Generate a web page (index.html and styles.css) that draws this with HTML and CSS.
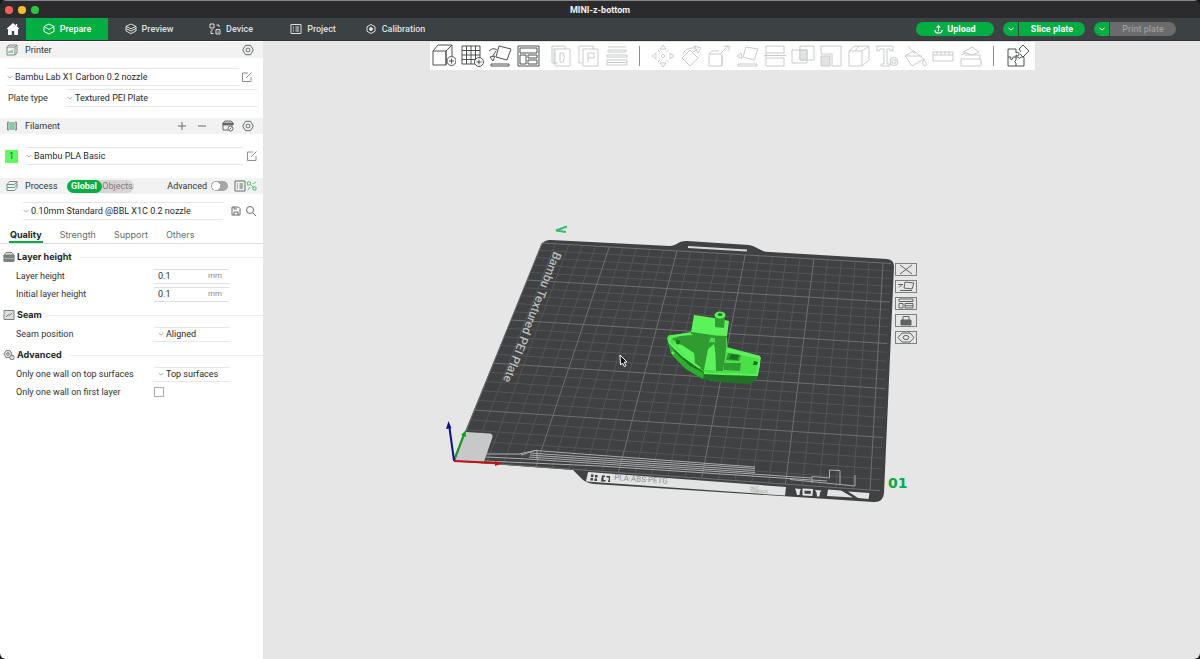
FILE: index.html
```html
<!DOCTYPE html>
<html lang="en">
<head>
<meta charset="utf-8">
<title>MINI-z-bottom</title>
<link rel="stylesheet" href="styles.css">
</head>
<body>
<svg class="defs" aria-hidden="true">
  <symbol id="chev" viewBox="0 0 6 6"><path d="M.5 2 3 4 5.500 2"/></symbol>
  <symbol id="gear" viewBox="0 0 12 12"><path d="M3.500 1.300h5L11.300 6 8.500 10.700h-5L.7 6z"/><circle cx="6" cy="6" r="2"/></symbol>
  <symbol id="edit" viewBox="0 0 12 12"><path d="M7 2H1.500v8.500H10V6M5 7l5.500-5.500"/></symbol>
</svg>
<div class="window">
  <header class="titlebar">
    <div class="lights"><i class="red"></i><i class="yellow"></i><i class="green"></i></div>
    <h1>MINI-z-bottom</h1>
  </header>

  <nav class="topnav">
    <button class="home" aria-label="Home"><svg viewBox="0 0 14 14"><path d="M7 1 .8 6.500 2 7.600V13h3.800V9h2.400v4H12V7.600l1.200-1.100-2-1.800V2H9.800v1.500z"/></svg></button>
    <button class="tab active"><svg viewBox="0 0 12 12"><path d="M6 1 11 3.500v5L6 11 1 8.500v-5zM1 3.500 6 6.500l5-3"/></svg>Prepare</button>
    <button class="tab"><svg viewBox="0 0 12 12"><path d="M6 1 11 3.400 6 5.800 1 3.400zM1 5.600 6 8l5-2.400M1 8 6 10.600 11 8M1 3.400V8M11 3.400V8"/></svg>Preview</button>
    <button class="tab"><svg viewBox="0 0 12 12"><path d="M1 1h4v4H1zM2 7h2M7.500 2H10v2M2 8v2.500h2.500M7 6.500h4V11H7zM8.500 9h1.500"/></svg>Device</button>
    <button class="tab"><svg viewBox="0 0 12 12"><path d="M1 1.500h10v9H1zM3 4h1M5.500 4H9M3 6h1M5.500 6H9M3 8h1M5.500 8H9"/></svg>Project</button>
    <button class="tab"><svg viewBox="0 0 12 12"><path d="M6 1.500 10 3.700v4.600L6 10.500 2 8.300V3.700z"/><circle class="dot" cx="6" cy="6" r="1.500"/></svg>Calibration</button>
    <div class="actions">
      <button class="pill upload"><svg viewBox="0 0 10 10"><path d="M5 7V1.200M3 3l2-2 2 2M1 5.500C1 10 9 10 9 5.500"/></svg>Upload</button>
      <div class="split"><button class="more" aria-label="Slice options"><svg><use href="#chev"/></svg></button><button class="main">Slice plate</button></div>
      <div class="split"><button class="more" aria-label="Print options"><svg><use href="#chev"/></svg></button><button class="main" disabled>Print plate</button></div>
    </div>
  </nav>

  <div class="body">
    <aside class="sidebar">
      <div class="head">
        <svg class="ico" viewBox="0 0 12 12"><path d="M1 3 3 1h8v8l-2 2H1zM1 3h8v8M9 3l2-2"/><path class="accent" d="M2 8l5-2.500V9H2z"/></svg>
        <h2>Printer</h2>
        <button class="ib push" aria-label="Printer settings"><svg><use href="#gear"/></svg></button>
      </div>
      <div class="row printer">
        <label class="pick"><svg><use href="#chev"/></svg><select aria-label="Printer"><option>Bambu Lab X1 Carbon 0.2 nozzle</option></select></label>
        <button class="ib" aria-label="Edit printer"><svg><use href="#edit"/></svg></button>
      </div>
      <div class="row plate">
        <label for="plate">Plate type</label>
        <span class="pick"><svg><use href="#chev"/></svg><select id="plate"><option>Textured PEI Plate</option></select></span>
      </div>

      <div class="head">
        <svg class="ico" viewBox="0 0 12 12"><path d="M3 2H1.500v8H3M9 2h1.500v8H9M3 2v8M9 2v8"/><path class="accent" d="M4 2h4v8H4z"/></svg>
        <h2>Filament</h2>
        <button class="ib push" aria-label="Add filament"><svg viewBox="0 0 12 12"><path d="M6 2v8M2 6h8"/></svg></button>
        <button class="ib" aria-label="Remove filament"><svg viewBox="0 0 12 12"><path d="M2 6h8"/></svg></button>
        <button class="ib ams" aria-label="Sync filament"><svg viewBox="0 0 12 12"><path d="M1 5V3l2-2h6l2 2v2M1 5v5h5"/><path class="solid" d="M1 3h10v2H1z"/><circle cx="8.500" cy="8.500" r="2.500"/><path d="m7.500 9.500 2-2M3 3v2M6 3v2"/></svg></button>
        <button class="ib" aria-label="Filament settings"><svg><use href="#gear"/></svg></button>
      </div>
      <div class="row filament">
        <button class="swatch">1</button>
        <label class="pick"><svg><use href="#chev"/></svg><select aria-label="Filament"><option>Bambu PLA Basic</option></select></label>
        <button class="ib" aria-label="Edit filament"><svg><use href="#edit"/></svg></button>
      </div>

      <div class="head">
        <svg class="ico" viewBox="0 0 12 12"><path d="M3.500 1.500H11L8.500 4.500H1zM1 10.500h7.500L11 7.500M11 1.500v6M1 4.500v6"/><path class="line" d="M1 7.500h7.500L11 4.500"/></svg>
        <h2>Process</h2>
        <div class="scope"><button class="on">Global</button><button>Objects</button></div>
        <label class="adv">Advanced<input type="checkbox" role="switch"></label>
        <button class="ib" aria-label="Parameter list"><svg viewBox="0 0 12 12"><path d="M1 1h10v10H1zM3 4h1M5.500 4H9M3 6h1M5.500 6H9M3 8h1M5.500 8H9"/></svg></button>
        <button class="ib compare" aria-label="Compare"><svg viewBox="0 0 12 12"><path d="M1.500 2h3v3h-3zM7 4l3-2M7 7h3v3H7zM4 7 2 10M5 5l3 3"/></svg></button>
      </div>
      <div class="row process">
        <label class="pick"><svg><use href="#chev"/></svg><select aria-label="Process"><option>0.10mm Standard @BBL X1C 0.2 nozzle</option></select></label>
        <button class="ib" aria-label="Save"><svg viewBox="0 0 12 12"><path d="M2 2h6.500L10 3.500V10H2zM4 10V7h4v3M4 2v2h3"/></svg></button>
        <button class="ib" aria-label="Search"><svg viewBox="0 0 12 12"><circle cx="5" cy="5" r="3.500"/><path d="m7.500 7.500 3.500 3.500"/></svg></button>
      </div>

      <div class="subtabs"><button class="on">Quality</button><button>Strength</button><button>Support</button><button>Others</button></div>

      <div class="groups">
        <fieldset>
          <legend><svg viewBox="0 0 12 12"><path class="fill" d="M1 10.500V4l2-2.500h6L11 4v6.500z"/><path class="solid" d="M1 4h10v2.500H1zM1 8h10v1.500H1z"/></svg>Layer height</legend>
          <div class="field"><label for="lh">Layer height</label><span class="num"><input id="lh" value="0.1"><em>mm</em></span></div>
          <div class="field"><label for="ilh">Initial layer height</label><span class="num"><input id="ilh" value="0.1"><em>mm</em></span></div>
        </fieldset>
        <fieldset>
          <legend><svg viewBox="0 0 12 12"><path class="fill" d="M1 1.500h10v9H1z"/><path d="m3 8 2-2 2 0 2-2"/></svg>Seam</legend>
          <div class="field"><label for="seam">Seam position</label><span class="pick"><svg><use href="#chev"/></svg><select id="seam"><option>Aligned</option></select></span></div>
        </fieldset>
        <fieldset>
          <legend><svg viewBox="0 0 12 12"><path class="fill" d="M3 1.500h4L9 5 7 8.500H3L1 5z"/><circle cx="5" cy="5" r="1.300"/><circle class="fill" cx="9" cy="8.500" r="2.200"/></svg>Advanced</legend>
          <div class="field"><label for="top">Only one wall on top surfaces</label><span class="pick"><svg><use href="#chev"/></svg><select id="top"><option>Top surfaces</option></select></span></div>
          <div class="field"><label for="first">Only one wall on first layer</label><input type="checkbox" id="first"></div>
        </fieldset>
      </div>
    </aside>

    <main class="workspace">
      <svg class="scene" viewBox="264 41 936 618" role="img" aria-label="Build plate with boat model">
        <path class="bed" d="M453 461 541 246Q544 239 551 240L670 246Q674 246 680 242Q683 241 687 241L749 245Q754 246 757 248L763 251Q765 252 770 252L887 259Q894 260 894 266L884 493Q883 503 873 502L594 484Q585 483 581 478L573 470Z"/>
        <path class="slot" d="M688 247 747 250.500"/>
        <g id="grid"></g>
        <text class="bedname" transform="translate(554 251) rotate(111.500)">Bambu Textured PEI Plate</text>
        <path class="pad" d="M466 432 490 433.500Q493 434 492.500 437L484 462 455 461Z"/>
        <g class="trace">
          <path d="M486 454H519L535 450.500 755 467M521 455 537 450V460M530 453 755 468.500M530 455 755 470.500M529 457 755 472.500M486 457 528 459 760 474.500M485 461 600 466 827 481M760 474.500 812 478"/>
          <path d="M812 483V476.500L829.500 478V470L840 470.500V484.500M790 479.500 855 486V475"/>
        </g>
        <path class="label" d="M588 472 786 487 785 495.500 586 481.500Z"/>
        <path class="mark" d="M591 474.500h2.500v2.500H591zM595 475h2.500v2.500H595zM590.500 478H593v2.500h-2.500zM594.500 478.500h2.500v2.500h-2.500zM602 475.500h3v1.500h-1.500v3h2v1.500H601zM606.500 476h3.500v6h-2v-1.500h.8v-3h-2.300z"/>
        <text class="small" transform="translate(614 480) rotate(4)">PLA·ABS·PETG</text>
        <text class="tiny" transform="translate(750 489) rotate(4)">HOT</text>
        <text class="tiny" transform="translate(750 492) rotate(4)">SURFACE</text>
        <path class="label" d="M795 488.500 801 489 800 491 799.500 495H797L796 491ZM815 490 821.500 490.500 820 492.500 819.500 496.500H817L816.500 492.500ZM828 489.500 841 490.500 853 497.500 827 496ZM848 491.500 869.500 493 868.500 499 858 498Z"/>
        <path class="cup" d="m803.500 489.500 8.500.5-.5 5-8-.5z"/>
        <g class="axes">
          <path class="g" d="m454 460 10-26"/><path class="g tip" d="m465.500 430.500-4.500 4.500 5 2z"/>
          <path class="b" d="M454 460.500 449.500 428"/><path class="b tip" d="m448.500 421-2.500 8 5.500-.8z"/>
          <path class="r" d="m454 461 43 2"/><path class="r tip" d="m502 463.500-7-2.500v5z"/>
        </g>
        <path class="flag" d="M567 226.500 556 230.500 566 232"/>
        <text class="plateno" x="888" y="488">01</text>

        <g class="boat">
          <path class="c1" d="M667 338Q668 334 674 335L691 332 727 337 727 347 760 356 760 366 757 377 750 383 712 381 700 377 684 367 671 353Z"/>
          <path class="c4" d="M668 343 675 350 690 362 704 372 757 376 754 382 748 384 718 382 702 379 686 369 673 356Z"/>
          <path class="c2" d="M668 343 676 353 690 366 704 373 703 379 686 369 673 356Z"/>
          <path class="c3" d="M672 339 680 336 694 335 696 356 684 347Z"/>
          <path class="c5" d="M673 343 682 345 694 353 697 364 686 357Z"/>
          <path class="c3" d="M693 333 711 337 706 349 704 371 695 365Z"/>
          <path class="c3" d="M706 344Q711 340 717 344L717 371 704 370 705 348Z"/>
          <path class="c5" d="M708 349 714 344 716 355 716 371 704 370Z"/>
          <path class="c3" d="M715 338 726 336 726 353 724 371 716 371Z"/>
          <path class="c1" d="M726 350 760 356 756 376 723 371Z"/>
          <path class="c5" d="M727 348 760 356 759 359 726 352Z"/>
          <path class="c3" d="M728 353 741 355 739 361 726 360ZM724 363 741 363 740 371 724 370Z"/>
          <path class="c4" d="M731 354 739 355 737 360 729 359Z"/>
          <path class="c5" d="M694 315 721 319 729 321 727 336 716 336 691 332Z"/>
          <path class="c3" d="M691 332 715 335.500 727 336 726 339 714 338 691 334ZM715 317 725 317 724 328 715 327Z"/>
          <ellipse class="c5" cx="720" cy="315" rx="5.500" ry="3.500"/>
          <ellipse class="c4" cx="720" cy="314.500" rx="2.500" ry="1.500"/>
          <ellipse class="c4" cx="678" cy="342" rx="2" ry="2.500"/><circle class="c5" cx="673" cy="353" r="1.500"/>
          <path class="c4" d="m754 361 4 1-1 3h-4z"/>
          <path class="rim" d="M691 333.500 673 336Q668 338 670 343L683 356 700 368"/>
          <path class="rim" d="m704 373 19 1 34 1 3-18"/>
        </g>
        <path class="cursor" d="m620 355 .5 10 2-2 1.800 3.500 1.700-.8-1.800-3.500 2.800-.2z"/>
      </svg>

      <div class="toolbar">
        <button aria-label="Add"><svg viewBox="0 0 24 24"><path d="M1 7h13v14H1zM1 7l5-6h14l-6 6M20 1v11M14 21V7"/><circle class="bg" cx="19.500" cy="17" r="4.500"/><path d="M17 17h5M19.500 14.500v5"/></svg></button>
        <button aria-label="Add plate"><svg viewBox="0 0 24 24"><path d="M2 2h18v18H2zM6.500 2v18M11 2v18M15.500 2v18M2 6.500h18M2 11h18M2 15.500h18"/><circle class="bg" cx="19" cy="18" r="4.500"/><path d="M16.500 18h5M19 15.500v5"/></svg></button>
        <button aria-label="Auto orient"><svg viewBox="0 0 24 24"><path d="m11 2 12 3-4 11-11-3zM3 20h18v2H3zM1 7q4-4 8-1M2 13l5-1-2 5zM4 13 8 7"/></svg></button>
        <button aria-label="Arrange"><svg viewBox="0 0 24 24"><path d="M2 2h21v20H2zM4 4h17v5H4zM4 11h6v9H4zM12 11h9v3h-9zM12 16h9v4h-9z"/></svg></button>
        <span class="gap"></span>
        <button disabled aria-label="Copy"><svg viewBox="0 0 24 24"><path d="M6 19H3V2h13v3M6 5h15v17H6zM9 19H5V4M11 9h3q3 4 0 9h-3z"/></svg></button>
        <button disabled aria-label="Paste"><svg viewBox="0 0 24 24"><path d="M5 19H2V2h14v3M6 5h15v17H6zM11 18V9h6v5h-6"/></svg></button>
        <button disabled aria-label="Layers"><svg viewBox="0 0 24 24"><path d="M3 3h18M3 6h18v2H3zM2 11h20v2H2zM2 16h20v5H2zM2 18.500h20"/></svg></button>
        <span class="sep"></span>
        <button disabled aria-label="Move"><svg viewBox="0 0 24 24"><path d="m12 1 3 4H9zM12 23l3-4H9zM1 12l4-3v6zM23 12l-4-3v6zM12 10l2 2-2 2-2-2zM7 6l2 2M17 6l-2 2M7 18l2-2M17 18l-2-2"/></svg></button>
        <button disabled aria-label="Rotate"><svg viewBox="0 0 24 24"><path d="m11 6 8 8-8 8-8-8zM4 10q2-7 13-6M15 2l7 2-3 5zM14 8l5-3"/></svg></button>
        <button disabled aria-label="Scale"><svg viewBox="0 0 24 24"><path d="M2 10h13v12H2zM2 10l3-3h7M15 22V12M14 9l7-7M17 2h5v5"/></svg></button>
        <button disabled aria-label="Lay on face"><svg viewBox="0 0 24 24"><path d="m11 3 12 2-4 11-11-3zM3 20h19v2H3zM2 12l5 3-1-6z"/></svg></button>
        <button disabled aria-label="Cut"><svg viewBox="0 0 24 24"><path d="M3 9V2h18v7zM3 14h18v8H3zM1 11.500h22M3 9v5"/></svg></button>
        <button disabled aria-label="Boolean"><svg viewBox="0 0 24 24"><path d="M1 6h15v13H1zM9 2h14v14H9z"/><path class="hatch" d="M9 6h7v10H9z"/></svg></button>
        <button disabled aria-label="Support paint"><svg viewBox="0 0 24 24"><path d="M2 2h20v20h-9V10H2z"/><path class="hatch" d="M2 12h9v10H2z"/></svg></button>
        <button disabled aria-label="Seam paint"><svg viewBox="0 0 24 24"><path d="M2 7h13v15H2zM2 7l5-5h15l-7 5M22 2v14l-7 6M8 7l4-5"/></svg></button>
        <button disabled aria-label="Text"><svg viewBox="0 0 24 24"><path d="M2 2h16v5h-2l-1-2h-3v15h3v2H6v-2h3V5H5L4 7H2z"/><circle class="bg" cx="19" cy="17.500" r="4"/><path d="M17 19v-3h4v3z"/></svg></button>
        <button disabled aria-label="Color paint"><svg viewBox="0 0 24 24"><path d="m11 7 10 8-12 7-7-10zM2 12h17M5 2l7 8M21 15q4 6 1 7-4-1-1-7z"/></svg></button>
        <button disabled aria-label="Measure"><svg viewBox="0 0 24 24"><path d="M2 8h20v9H2zM2 11h20M6 8v3M10 8v3M14 8v3M18 8v3"/></svg></button>
        <button disabled aria-label="Assemble"><svg viewBox="0 0 24 24"><path d="M2 15h20v7H2zM6 11h15v4M4 8l9-5 7 5-7 3zM2 11l5-2"/></svg></button>
        <span class="sep"></span>
        <button class="assembly" aria-label="Assembly view"><svg viewBox="0 0 24 24"><path d="M2 5h8v4q3-2 3 1t-3 1v2H7q0 3-2 2.500T5 13H2zM2 13v9h8v-3q-3-1 0-3v-3M10 22h8v-9h-3q-1 3-3 0h-2M13 5l4-4 6 6-6 6-3-3M13 5l2 3"/></svg></button>
      </div>

      <div class="platebtns">
        <button aria-label="Delete plate"><svg viewBox="0 0 20 11"><path d="m4 1 12 9M16 1 4 10"/></svg></button>
        <button aria-label="Orient plate"><svg viewBox="0 0 20 11"><path d="m9 1 9 1-2 6-8-1zM4 9.500h12M2 3.500h5M3 6.500l3-3"/></svg></button>
        <button aria-label="Arrange plate"><svg viewBox="0 0 20 11"><path d="M3 1h14v2.500H3zM3 5.500h4V10H3zM9 5.500h8V10H9zM9 7.800h8"/></svg></button>
        <button aria-label="Lock plate"><svg viewBox="0 0 20 11"><path class="solid" d="M5 5h10v5H5z"/><path d="M7 5V1.500h6V5"/></svg></button>
        <button aria-label="Plate settings"><svg viewBox="0 0 20 11"><path d="M6 1h8l4 4.500-4 4.500H6L2 5.500z"/><ellipse cx="10" cy="5.500" rx="3" ry="2"/></svg></button>
      </div>
    </main>
  </div>
</div>
<script src="grid.js"></script>
</body>
</html>
```

FILE: styles.css
```css
* { box-sizing: border-box; }
body { margin: 0; background: #17171a; font: 9px/12px Roboto, "Liberation Sans", sans-serif; color: #303436; }
button, select, input { font: inherit; color: inherit; border: 0; padding: 0; margin: 0; background: none; }
h1, h2 { margin: 0; font: inherit; }
svg { fill: none; stroke: currentColor; }
.defs { position: absolute; width: 0; height: 0; }
.window { display: flex; flex-direction: column; min-height: 100vh; border-radius: 6px; overflow: hidden; background: #2b2b2d; }

.titlebar { display: grid; grid-template-columns: 1fr auto 1fr; align-items: center; height: 18px; border-top: 1px solid #85878a; color: #f2f2f2; }
.titlebar h1 { font-weight: 700; }
.lights { display: flex; gap: 5px; padding-left: 5px; }
.lights i { width: 8px; height: 8px; border-radius: 50%; }
.red { background: #fd5f57; }
.yellow { background: #febc2e; }
.green { background: #28c840; }

.topnav { display: flex; height: 23px; background: #3c4144; color: #dfe0e0; border-bottom: 1px solid #2e3335; font-weight: 500; }
.home { width: 26px; display: grid; place-items: center; }
.home svg { width: 14px; height: 14px; fill: #fff; stroke: none; }
.tab { width: 82px; display: flex; align-items: center; justify-content: center; gap: 5px; }
.tab svg { width: 12px; height: 12px; }
.tab.active { background: #00ae42; color: #fff; }
.dot { fill: currentColor; }
.actions { margin-left: auto; padding-right: 24px; display: flex; align-items: center; gap: 9px; font-weight: 700; color: #fff; }
.pill { display: flex; align-items: center; justify-content: center; gap: 4px; width: 78px; height: 14px; border-radius: 7px; background: #00ae42; }
.pill svg { width: 9px; height: 9px; stroke-width: 1.3; }
.split { display: flex; gap: 1px; }
.split button { height: 14px; background: #00ae42; }
.split .more { width: 15px; border-radius: 7px 0 0 7px; display: grid; place-items: center; }
.more svg { width: 6px; height: 6px; }
.split .main { width: 66px; border-radius: 0 7px 7px 0; }
.split .main:disabled { background: #6b6b6b; color: #9b9d9d; font-weight: 500; }

.body { flex: 1; display: flex; }
.sidebar { flex: 0 0 264px; background: #fff; border-right: 1px solid #e6e6e6; padding-top: 1px; }
.head { display: flex; align-items: center; height: 16px; padding: 0 9px 0 6px; background: #f2f2f2; }
.head h2 { margin-left: 7px; }
.ico { width: 12px; height: 12px; color: #858888; }
.ico .accent { fill: #7bd39b; stroke: none; }
.ico .line { stroke: #3cbf6d; }
.ib { width: 12px; height: 12px; flex: none; display: grid; place-items: center; color: #666b6b; }
.ib svg { width: 12px; height: 12px; }
.push { margin-left: auto; }
.head .ib + .ib { margin-left: 8px; }
.head .ib.ams { margin-left: 14px; }
.head .ib.compare { margin-left: 0; color: #55c77f; }
.solid { fill: currentColor; }
.row { display: flex; align-items: center; height: 18px; }
.pick { display: flex; align-items: center; height: 18px; flex: 1; border: solid #e6e6e6; border-width: 1px 0; }
.pick svg { width: 6px; height: 6px; color: #adb0b0; flex: none; margin-right: 2px; }
.pick select { appearance: none; flex: 1; min-width: 0; height: 14px; color: #262a2c; }
.printer { margin: 10px 10px 3px 7px; }
.printer .ib { margin-left: 2px; color: #8b8f8f; }
.plate { margin: 0 6px 11px 8px; }
.plate label { width: 59px; }
.filament { margin: 13px 5px; }
.filament .pick { margin: 0 3px 0 8px; }
.filament .ib { color: #8b8f8f; }
.swatch { width: 13px; height: 13px; background: #61fc5f; color: #1f5f1f; }
.process { margin: 8px 6px 2px 23px; gap: 3px; }
.process .pick { margin-right: 4px; }
.scope { display: flex; margin-left: 9px; height: 13px; border-radius: 7px; background: #d6d6d6; color: #7b7d7d; }
.scope .on { width: 35px; border-radius: 7px; background: #00ae42; color: #fff; font-weight: 700; }
.scope button { width: 32px; line-height: 13px; }
.adv { display: flex; align-items: center; gap: 4px; margin: 0 6px 0 auto; }
.adv input { appearance: none; width: 17px; height: 10px; border-radius: 5px; background: radial-gradient(circle at 5px 5px, #fff 4px, #a5a7a7 4px); }
.head .adv + .ib { margin-left: 0; }
.head:has(.adv) { padding-right: 5px; }

.subtabs { display: flex; gap: 16px; height: 22px; padding-left: 9px; border-bottom: 1px solid #dedede; color: #696d6f; font-family: Inter, "Liberation Sans", sans-serif; }
.subtabs button { height: 21px; padding: 6px 1px 0; border-bottom: 2px solid transparent; }
.subtabs .on { color: #222628; font-weight: 700; border-color: #00ae42; }
.groups { padding-top: 5px; display: grid; gap: 4px; }
fieldset { margin: 0; border: 0; padding: 0; min-width: 0; }
legend { display: flex; align-items: center; gap: 2px; width: 100%; height: 18px; padding: 0 0 2px 3px; font-family: Inter, "Liberation Sans", sans-serif; font-weight: 700; color: #222628; }
legend::after { content: ""; flex: 1; margin-left: 5px; border-top: 1px solid #eeeeee; }
legend svg { width: 12px; height: 12px; color: #7d8080; }
legend .fill { fill: #dcdede; }
.field { display: grid; grid-template-columns: 138px 75px; align-items: center; height: 18px; padding-left: 16px; }
.field .pick, .num { height: 15px; }
.field .pick { padding-left: 4px; }
.num { display: flex; align-items: center; border: solid #dfdfdf; border-width: 1px 0; padding: 0 7px 0 4px; }
.num input { flex: 1; min-width: 0; height: 12px; }
.num em { font-style: normal; font-size: 8px; color: #858888; }
.field input[type="checkbox"] { appearance: none; width: 10px; height: 10px; border: 1px solid #a9acac; }

.workspace { flex: 1; position: relative; background: #e6e6e6; min-width: 0; }
.scene { position: absolute; inset: 0; width: 100%; height: 100%; }
.scene path, .scene ellipse, .scene circle { stroke: none; }
.scene text { stroke: none; }
.bed { fill: #3f4142; }
.scene .slot { stroke: #d9d9d9; stroke-width: 2; }
.scene .minor { stroke: #535657; stroke-width: 1; }
.scene .major { stroke: #6d7071; stroke-width: 1; }
.bedname { fill: #b9bbbb; font: 500 12px Roboto, sans-serif; }
.pad { fill: #c6c9c8; }
.scene .trace path { stroke: #a9acac; stroke-width: 1; }
.label { fill: #e2e3e3; }
.mark { fill: #3d4041; }
.scene .cup { stroke: #e2e3e3; stroke-width: 2; }
.small { fill: #8d9090; font: 8px Roboto, sans-serif; }
.tiny { fill: #8d9090; font: 4px Inter, sans-serif; }
.scene .axes path { stroke-width: 2; }
.scene .axes .g { stroke: #10a21a; }
.scene .axes .b { stroke: #10108c; }
.scene .axes .r { stroke: #c80e0e; }
.scene .axes .tip { stroke: none; }
.g.tip { fill: #10a21a; }
.b.tip { fill: #10108c; }
.r.tip { fill: #c80e0e; }
.scene .flag { stroke: #36bd6b; stroke-width: 2; }
.plateno { fill: #00ae42; font: bold 14px "DejaVu Sans", sans-serif; }
.c1 { fill: #4ae048; }
.c2 { fill: #2faf2f; }
.c3 { fill: #2f9c31; }
.c4 { fill: #207324; }
.c5 { fill: #5cf25a; }
.scene .rim { stroke: #5cf25a; stroke-width: 2; }
.scene .cursor { fill: #111; stroke: #fff; stroke-width: 1; }

.toolbar { position: relative; display: flex; align-items: center; width: max-content; height: 28px; margin: 1px auto 0; padding-right: 2px; background: #fff; color: #4d5152; }
.toolbar button { width: 28px; height: 26px; display: grid; place-items: center; }
.toolbar button:disabled { color: #c9cbcb; }
.toolbar svg { width: 24px; height: 24px; }
.toolbar .bg { fill: #fff; }
.toolbar .hatch { fill: #e2e3e3; }
.gap { width: 5px; }
.sep { width: 18px; height: 20px; display: grid; justify-content: center; }
.sep::before { content: ""; width: 1px; background: #8b8e8f; }
.toolbar .assembly { width: 30px; }

.platebtns { position: absolute; left: 67.4%; top: 36%; display: grid; gap: 4px; }
.platebtns button { width: 22px; height: 13px; border: 1px solid #7d8080; color: #5f6363; display: grid; }
.platebtns svg { width: 20px; height: 11px; }
```

FILE: grid.js
```js
// Perspective projection of the 250 mm bed onto the scene.
const corners = [[454, 461], [870, 490], [883, 263], [542, 243]];

function projector([p0, p1, p2, p3]) {
  const sx = p0[0] - p1[0] + p2[0] - p3[0];
  const sy = p0[1] - p1[1] + p2[1] - p3[1];
  const ax = p1[0] - p2[0], ay = p1[1] - p2[1];
  const bx = p3[0] - p2[0], by = p3[1] - p2[1];
  const det = ax * by - bx * ay;
  const g = (sx * by - bx * sy) / det;
  const h = (ax * sy - sx * ay) / det;
  return (u, v) => {
    const w = g * u + h * v + 1;
    return [0, 1].map(i =>
      ((p1[i] - p0[i] + g * p1[i]) * u + (p3[i] - p0[i] + h * p3[i]) * v + p0[i]) / w);
  };
}

const project = projector(corners);
const grid = document.getElementById("grid");
const limit = 256 / 250;

function line(from, to, major) {
  const el = document.createElementNS("http://www.w3.org/2000/svg", "path");
  el.setAttribute("class", major ? "major" : "minor");
  el.setAttribute("d", "M" + project(...from).join(" ") + "L" + project(...to).join(" "));
  grid.append(el);
}

for (const major of [false, true]) {
  for (let i = 0; i <= 25; i++) {
    if ((i % 5 === 0) !== major) continue;
    const t = i / 25;
    line([t, 0], [t, 1], major);
    line([0, t], [limit, t], major);
  }
}
```
